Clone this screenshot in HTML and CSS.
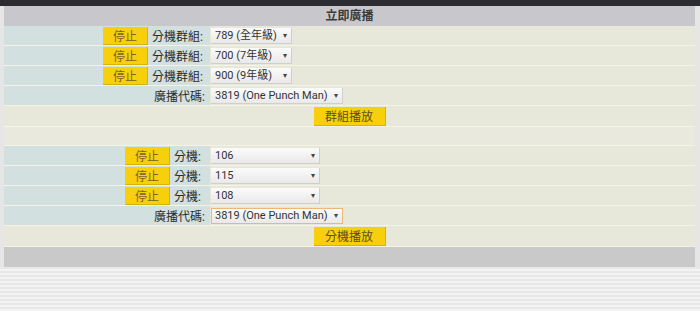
FILE: index.html
```html
<!DOCTYPE html>
<html lang="zh-Hant">
<head>
    <meta charset="UTF-8">
    <title>立即廣播</title>
    <link rel="stylesheet" href="styles.css">
</head>
<body>
    <div class="topbar"></div>
    <div class="wrap">
        <div class="panel">
            <div class="title">立即廣播</div>

            <div class="group group-ext">
                <div class="row">
                    <div class="cell stop"><button class="btn btn-stop">停止</button></div>
                    <div class="cell label">分機群組:</div>
                    <div class="cell field"><span class="pick w81"><span class="val">789 (全年級)</span></span></div>
                </div>
                <div class="row">
                    <div class="cell stop"><button class="btn btn-stop">停止</button></div>
                    <div class="cell label">分機群組:</div>
                    <div class="cell field"><span class="pick w81"><span class="val">700 (7年級)</span></span></div>
                </div>
                <div class="row">
                    <div class="cell stop"><button class="btn btn-stop">停止</button></div>
                    <div class="cell label">分機群組:</div>
                    <div class="cell field"><span class="pick w81"><span class="val">900 (9年級)</span></span></div>
                </div>
                <div class="row">
                    <div class="cell label span2">廣播代碼:</div>
                    <div class="cell field"><span class="pick w132"><span class="val">3819 (One Punch Man)</span></span></div>
                </div>
                <div class="row row-play">
                    <button class="btn btn-play">群組播放</button>
                </div>
            </div>

            <div class="row row-blank"></div>

            <div class="group group-one">
                <div class="row">
                    <div class="cell stop"><button class="btn btn-stop">停止</button></div>
                    <div class="cell label">分機:</div>
                    <div class="cell field"><span class="pick w109"><span class="val">106</span></span></div>
                </div>
                <div class="row">
                    <div class="cell stop"><button class="btn btn-stop">停止</button></div>
                    <div class="cell label">分機:</div>
                    <div class="cell field"><span class="pick w109"><span class="val">115</span></span></div>
                </div>
                <div class="row">
                    <div class="cell stop"><button class="btn btn-stop">停止</button></div>
                    <div class="cell label">分機:</div>
                    <div class="cell field"><span class="pick w109"><span class="val">108</span></span></div>
                </div>
                <div class="row">
                    <div class="cell label span2">廣播代碼:</div>
                    <div class="cell field"><span class="pick w132 focus"><span class="val">3819 (One Punch Man)</span></span></div>
                </div>
                <div class="row row-play">
                    <button class="btn btn-play">分機播放</button>
                </div>
            </div>

            <div class="footer"></div>
        </div>
    </div>
    <div class="fade"></div>
</body>
</html>
```

FILE: styles.css
```css
body {
    margin: 0;
    background-color: #fff;
    font-family: Roboto, "Noto Sans CJK TC", sans-serif;
    font-size: 12px;
    color: #333;
}
.topbar {
    height: 6px;
    background-color: #2c2c30;
}
.wrap {
    background-color: #e6e6e6;
    padding: 0 5px 0 4px;
}
.panel {
    background-color: #e7e7da;
}
.title {
    height: 20px;
    line-height: 20px;
    text-align: center;
    background-color: #c8c8cc;
    color: #3a3a3a;
    font-weight: bold;
}
.row {
    display: grid;
    height: 19px;
    border-bottom: 1px solid #f3f3e8;
}
.group-ext .row {
    grid-template-columns: 146px 60px 1fr;
}
.group-one .row {
    grid-template-columns: 168px 38px 1fr;
}
.cell {
    display: flex;
    align-items: center;
}
.stop {
    justify-content: flex-end;
    padding-right: 2px;
    background-color: #d2e1df;
}
.label {
    background-color: #d2e1df;
    padding-left: 2px;
    color: #2a2a2a;
    white-space: nowrap;
}
.span2 {
    grid-column: 1 / 3;
    justify-content: flex-end;
    padding-right: 5px;
}
.field {
    padding-left: 1px;
}
.row-play {
    display: flex;
    justify-content: center;
    align-items: center;
    height: 20px;
}
.row-blank {
    height: 18px;
    border-bottom: 1px solid #f3f3e8;
    background-color: #e9e9de;
}
.btn {
    font-family: "Noto Sans CJK TC", sans-serif;
    font-size: 12px;
    color: #76662a;
    background-color: #f7cf0a;
    border: none;
    border-right: 1px solid #d9b400;
    border-bottom: 1px solid #d9b400;
    padding: 0;
    line-height: 17px;
    cursor: pointer;
}
.btn-stop {
    width: 45px;
    height: 18px;
}
.btn-play {
    width: 72px;
    height: 19px;
    color: #5a4e22;
}
.pick {
    position: relative;
    display: inline-block;
    height: 16px;
    line-height: 16px;
    box-sizing: border-box;
    overflow: hidden;
    white-space: nowrap;
    background: linear-gradient(#fbfbfb, #e9e9e9);
    border-right: 1px solid #cfcfcf;
    border-bottom: 1px solid #cfcfcf;
    padding: 0 12px 0 4px;
    font-size: 11px;
    color: #333;
}
.pick::after {
    content: "\25BE";
    position: absolute;
    right: 4px;
    top: 0;
    font-size: 8px;
    color: #444;
}
.pick.focus {
    border: 1px solid #ecb87a;
    padding-left: 3px;
    line-height: 14px;
}
.w81 { width: 81px; }
.w109 { width: 109px; }
.w132 { width: 132px; }
.footer {
    height: 20px;
    background-color: #c9c9c9;
}
.fade {
    height: 44px;
    background: repeating-linear-gradient(#e8e8e8 0, #e8e8e8 2px, #f3f3f3 2px, #f3f3f3 4px);
}
```
